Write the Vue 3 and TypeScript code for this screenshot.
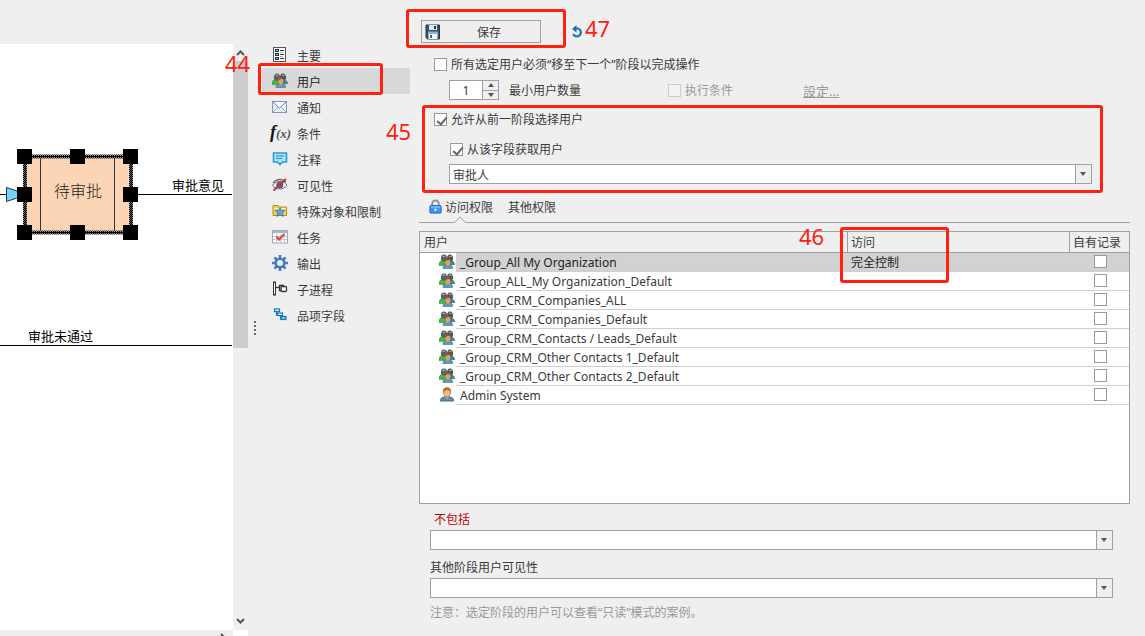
<script setup lang="ts">
import { ref } from 'vue'

interface NavItem { icon: string; label: string }
interface AccessRow { name: string; kind: 'group' | 'person'; access: string; own: boolean }

const navItems: NavItem[] = [
  { icon: 'main', label: '主要' },
  { icon: 'group', label: '用户' },
  { icon: 'mail', label: '通知' },
  { icon: 'fx', label: '条件' },
  { icon: 'note', label: '注释' },
  { icon: 'eye', label: '可见性' },
  { icon: 'folder', label: '特殊对象和限制' },
  { icon: 'task', label: '任务' },
  { icon: 'gear', label: '输出' },
  { icon: 'sub', label: '子进程' },
  { icon: 'fields', label: '品项字段' },
]
const activeNav = ref(1)
const minUsers = ref(1)
const mustMove = ref(false)
const runCondition = ref(false)
const allowSelect = ref(true)
const fromField = ref(true)
const selectedRow = ref(0)

const rows = ref<AccessRow[]>([
  { name: '_Group_All My Organization', kind: 'group', access: '完全控制', own: false },
  { name: '_Group_ALL_My Organization_Default', kind: 'group', access: '', own: false },
  { name: '_Group_CRM_Companies_ALL', kind: 'group', access: '', own: false },
  { name: '_Group_CRM_Companies_Default', kind: 'group', access: '', own: false },
  { name: '_Group_CRM_Contacts / Leads_Default', kind: 'group', access: '', own: false },
  { name: '_Group_CRM_Other Contacts 1_Default', kind: 'group', access: '', own: false },
  { name: '_Group_CRM_Other Contacts 2_Default', kind: 'group', access: '', own: false },
  { name: 'Admin System', kind: 'person', access: '', own: false },
])

const handles = [
  [17, 105], [70, 105], [123, 105],
  [17, 143], [123, 143],
  [17, 181], [70, 181], [123, 181],
]
</script>

<template>
  <div class="app">
    <svg class="defs" aria-hidden="true">
      <defs>
        <symbol id="i-main" viewBox="0 0 16 16">
          <rect x="1.500" y="0.500" width="12" height="14" fill="#fff" stroke="#555" />
          <path d="M3 2h4v3H3zM3 6h4v3H3zM3 10h4v3H3z" fill="#16384f" />
          <path d="M4 3h2v1H4zM4 7h2v1H4zM4 11h2v1H4z" fill="#79c4ee" />
          <path d="M8 3.500h4M8 7.500h4M8 11.500h4" stroke="#333" />
          <path d="M8 5.500h3M8 9.500h3" stroke="#aaa" />
        </symbol>
        <symbol id="i-group" viewBox="0 0 16 16">
          <path d="M0 10.500c0-3 2-4 4-4.500l4 1.500-2 4H0z" fill="#45b83a" stroke="#36802f" stroke-width=".5" />
          <path d="M9 8l3-1.500c2 .5 4 1.500 4 4.500h-5z" fill="#3f8396" />
          <path d="M2 6c-.5-3.500.5-5.500 2.800-5.500S8 2 8 4v3.500H4z" fill="#59626a" />
          <path d="M8 6c-.3-3.500.7-5.500 3-5.500s3.500 2.500 3 5.500l-2 2H8z" fill="#4d555d" />
          <path d="M3.500 3c.5-1.200 2-1.200 2.500 0M10 3c.5-1.200 2-1.200 2.500 0" stroke="#b8c0c4" stroke-width="1" fill="none" />
          <path d="M4 14.500c-.3-2.500 1.300-3.700 3.300-4h3c2 .3 3.600 1.500 3.300 4z" fill="#6298b8" stroke="#3d6f91" stroke-width=".6" />
          <path d="M6.200 7.500c0-2 1-2.700 2.600-2.700s2.700.7 2.700 2.700S10.200 11.800 8.800 11.800 6.200 9.500 6.200 7.500z" fill="#dda06c" />
          <path d="M6 8c-.3-2.500 1-3.700 2.800-3.700S12 5.500 11.700 8L10.500 6 8 6.200z" fill="#985321" />
        </symbol>
        <symbol id="i-person" viewBox="0 0 16 16">
          <path d="M1.500 14c0-3 1.500-4 4.500-4h4c3 0 4.500 1 4.500 4z" fill="#5d91b3" stroke="#3c6a8c" />
          <path d="M5.800 9h4.400L8 12.500z" fill="#e4aa76" />
          <path d="M4.500 5c0-2.800 1.300-4 3.500-4s3.500 1.200 3.500 4S10 10 8 10 4.500 7.800 4.500 5z" fill="#efba88" stroke="#a55c2b" stroke-width=".7" />
          <path d="M4 6c-.7-3.600 1-5.500 4-5.500S12.700 2.400 12 6L10.800 3.500 8 3l-2.900 1z" fill="#b96a31" />
        </symbol>
        <symbol id="i-mail" viewBox="0 0 16 16">
          <rect x=".5" y="2.500" width="14" height="11" fill="#eaf1fc" stroke="#8596b8" />
          <path d="M1 13l5-5M14 13L9 8" stroke="#9aa9c8" fill="none" />
          <path d="M1 3l6.500 6L14 3" stroke="#7183aa" fill="#f7faff" />
        </symbol>
        <symbol id="i-note" viewBox="0 0 16 16">
          <path d="M1.500 2h13v9h-4l-2.500 2.500L5.500 11h-4z" fill="#b4e0f7" stroke="#289bd8" stroke-width="1.600" />
          <path d="M4 5h8M4 7.500h6" stroke="#1688c8" />
        </symbol>
        <symbol id="i-eye" viewBox="0 0 16 16">
          <path d="M.5 8.500C3 3.500 12 3 15 8c-3 5-11 5.500-14.500.5z" fill="#e9edf4" stroke="#6d7488" />
          <circle cx="7.800" cy="8" r="3" fill="#5577aa" stroke="#394b70" /><circle cx="7.800" cy="8" r="1.200" fill="#172440" />
          <path d="M1 6c3-4 9-5 13-1" stroke="#8b5a50" stroke-width="1.500" fill="none" />
          <path d="M1.500 13.500L14 2" stroke="#bb392b" stroke-width="2" />
        </symbol>
        <symbol id="i-folder" viewBox="0 0 16 16">
          <path d="M1 12.500v-10h5l1 1.500h7.500v8.500z" fill="#f4cf5a" stroke="#b98a24" />
          <path d="M2 5.500h12" stroke="#fff0ab" />
          <path d="M8 4.500l1.300 3 3.500.3-2.600 2.300.8 3.400-3-1.900-3 1.900.8-3.400-2.600-2.300 3.500-.3z" fill="#5aabd8" stroke="#287aae" stroke-width=".8" />
        </symbol>
        <symbol id="i-task" viewBox="0 0 16 16">
          <rect x=".5" y="1.500" width="15" height="12.500" fill="#fff" stroke="#9baab9" />
          <path d="M1 3h14" stroke="#a4bacb" stroke-width="2.500" />
          <path d="M1 7.500h14M1 10.500h14M4.500 5v9M8.500 5v9M12.500 5v9" stroke="#bccbd6" />
          <path d="M4.500 7.500L7 10.500 12.500 5" stroke="#e04b2c" stroke-width="2.300" fill="none" />
        </symbol>
        <symbol id="i-gear" viewBox="0 0 16 16">
          <circle cx="8" cy="8" r="4.300" fill="none" stroke="#447ebc" stroke-width="2.600" />
          <path d="M8 0v3M8 13v3M0 8h3M13 8h3M2.400 2.400l2 2M11.600 11.600l2 2M2.400 13.600l2-2M11.600 4.400l2-2" stroke="#447ebc" stroke-width="2.600" />
        </symbol>
        <symbol id="i-sub" viewBox="0 0 16 16">
          <rect x="1.500" y="1" width="2" height="13" fill="#fff" stroke="#333" />
          <path d="M4 6.500h3" stroke="#333" stroke-width="1.300" fill="none" />
          <path d="M12 4.500H7.500v5H9" fill="none" stroke="#333" stroke-width="1.300" />
          <rect x="9" y="5.500" width="5.500" height="5" rx="1" fill="#fff" stroke="#333" stroke-width="1.300" />
        </symbol>
        <symbol id="i-fields" viewBox="0 0 16 16">
          <g fill="#fff" stroke="#1676b6" stroke-width="1.200">
            <path d="M4.500 5v3H6M8.500 9v3h1" fill="none" />
            <rect x="2.500" y="2" width="5" height="2.500" /><rect x="5.500" y="6" width="5" height="2.500" /><rect x="9" y="9.500" width="5" height="3" fill="#79c4ee" />
          </g>
        </symbol>
        <symbol id="i-save" viewBox="0 0 16 16">
          <path d="M1 1h13.500v14H2.500L1 13.500z" fill="#3e4e65" stroke="#2c3848" />
          <rect x="4" y="1" width="8" height="5" fill="#dbe6f1" /><rect x="9" y="2" width="2" height="3" fill="#273447" />
          <rect x="3" y="7.500" width="10" height="3" fill="#8fb2d5" />
          <rect x="3.500" y="10" width="9" height="5" fill="#f5f7fa" /><rect x="5" y="11" width="2" height="3" fill="#51647c" />
        </symbol>
        <symbol id="i-lock" viewBox="0 0 16 16">
          <path d="M4.500 7.500V4.500a3.500 3.500 0 0 1 7 0v3" fill="none" stroke="#888" stroke-width="1.800" />
          <rect x="2" y="6.500" width="12" height="8" rx="1" fill="#3f98f5" stroke="#1763be" />
          <path d="M3 8h10" stroke="#9dd0ff" /><circle cx="8" cy="11" r="1.200" fill="#fff" />
        </symbol>
        <symbol id="i-redo" viewBox="0 0 12 14">
          <path d="M5 3.500A4 4 0 1 1 2.200 9" fill="none" stroke="#2878bf" stroke-width="2.400" />
          <path d="M1 4L5.500 0v7.500z" fill="#2468aa" />
        </symbol>
      </defs>
    </svg>

    <section class="canvas-pane">
      <div class="canvas">
        <svg class="diagram" viewBox="0 0 233 586" width="233" height="586">
          <defs>
            <pattern id="hatch" width="2" height="2" patternUnits="userSpaceOnUse">
              <rect width="2" height="2" fill="#999" /><rect width="1" height="1" fill="#000" /><rect x="1" y="1" width="1" height="1" fill="#000" />
            </pattern>
          </defs>
          <path d="M0 150.500H8M138 150.500H232M0 301.500H232" stroke="#000" />
          <path d="M6.500 143.500L20 148v5l-13.500 4.500z" fill="#6fd6fb" stroke="#234" />
          <rect x="25" y="112.500" width="106" height="76" fill="#fbd5b5" stroke="url(#hatch)" stroke-width="4" />
          <path d="M25 112.500h106v76H25z" fill="none" stroke="#000" />
          <path d="M40.500 114V187M114.500 114V187" stroke="#333" />
          <rect v-for="(h, i) in handles" :key="i" :x="h[0]" :y="h[1]" width="15" height="15" fill="#000" />
          <text x="78" y="153" class="node-text" text-anchor="middle">待审批</text>
          <text x="172" y="146" class="edge-text">审批意见</text>
          <text x="28" y="297" class="edge-text">审批未通过</text>
        </svg>
      </div>
      <div class="scroll-y">
        <svg width="9" height="6" viewBox="0 0 9 6"><path d="M1 5l3.500-3.500L8 5" fill="none" stroke="#555" stroke-width="2" /></svg>
        <div class="thumb"></div>
        <svg class="down" width="9" height="6" viewBox="0 0 9 6"><path d="M1 1l3.500 3.500L8 1" fill="none" stroke="#555" stroke-width="2" /></svg>
      </div>
      <div class="scroll-x">
        <svg width="6" height="9" viewBox="0 0 6 9"><path d="M1 1l3.500 3.500L1 8" fill="none" stroke="#555" stroke-width="2" /></svg>
      </div>
      <div class="corner"></div>
    </section>

    <div class="splitter"><i></i><i></i><i></i><i></i></div>

    <nav class="nav">
      <button
        v-for="(item, i) in navItems" :key="item.label" type="button"
        class="nav-item" :class="{ active: i === activeNav }" @click="activeNav = i"
      >
        <span v-if="item.icon === 'fx'" class="fx"><b>f</b>(x)</span>
        <svg v-else class="icon"><use :href="'#i-' + item.icon" /></svg>
        <span class="nav-label">{{ item.label }}</span>
      </button>
      <div class="mark mark-nav"></div>
      <span class="num num-nav">44</span>
    </nav>

    <main class="main">
      <div class="toolbar">
        <button type="button" class="save"><svg class="icon"><use href="#i-save" /></svg><span>保存</span></button>
        <button type="button" class="redo" aria-label="刷新"><svg width="12" height="14"><use href="#i-redo" /></svg></button>
        <div class="mark mark-save"></div>
        <span class="num num-save">47</span>
      </div>

      <div class="options">
        <label class="check"><input v-model="mustMove" type="checkbox"><span>所有选定用户必须“移至下一个”阶段以完成操作</span></label>
        <div class="count-row">
          <div class="spinner">
            <input id="min-users" v-model="minUsers" type="text">
            <div class="spin">
              <button type="button" aria-label="增加" @click="minUsers++"><i class="tri up"></i></button>
              <button type="button" aria-label="减少" @click="minUsers--"><i class="tri"></i></button>
            </div>
          </div>
          <label for="min-users" class="count-label">最小用户数量</label>
          <label class="check disabled"><input v-model="runCondition" type="checkbox" disabled><span>执行条件</span></label>
          <a href="#" class="settings">設定...</a>
        </div>
      </div>

      <div class="source">
        <label class="check"><input v-model="allowSelect" type="checkbox"><span>允许从前一阶段选择用户</span></label>
        <label class="check inner"><input v-model="fromField" type="checkbox"><span>从该字段获取用户</span></label>
        <div class="drop inner"><select aria-label="字段"><option>审批人</option></select><i class="tri"></i></div>
        <div class="mark mark-source"></div>
        <span class="num num-source">45</span>
      </div>

      <div class="tabs">
        <button type="button" class="tab current"><svg class="icon lock"><use href="#i-lock" /></svg><span>访问权限</span></button>
        <button type="button" class="tab"><span>其他权限</span></button>
      </div>

      <div class="grid-panel">
        <table>
          <colgroup><col class="c-icon"><col><col class="c-access"><col class="c-own"></colgroup>
          <thead>
            <tr>
              <th colspan="2">用户</th>
              <th class="sep">访问<div class="mark mark-access"></div><span class="num num-access">46</span></th>
              <th class="sep">自有记录</th>
            </tr>
          </thead>
          <tbody>
            <tr v-for="(row, i) in rows" :key="row.name" :class="{ selected: i === selectedRow }" @click="selectedRow = i">
              <td class="cell-icon"><svg class="icon"><use :href="'#i-' + row.kind" /></svg></td>
              <td>{{ row.name }}</td>
              <td>{{ row.access }}</td>
              <td class="cell-check"><input v-model="row.own" type="checkbox" :aria-label="row.name"></td>
            </tr>
          </tbody>
        </table>
      </div>

      <div class="bottom">
        <label for="exclude" class="exclude">不包括</label>
        <div class="drop"><select id="exclude"><option></option></select><i class="tri"></i></div>
        <label for="visible" class="visible">其他阶段用户可见性</label>
        <div class="drop"><select id="visible"><option></option></select><i class="tri"></i></div>
        <p>注意：选定阶段的用户可以查看“只读”模式的案例。</p>
      </div>
    </main>
  </div>
</template>

<style>
body { margin: 0; background: #efefef; }
</style>

<style scoped>
* { box-sizing: border-box; }
.app {
  display: flex; min-height: 100vh; overflow: hidden; background: #efefef; color: #3a3a3a;
  font-family: "Noto Sans", "Noto Sans CJK SC", sans-serif; font-size: 12px; line-height: 18px;
}
.defs { position: absolute; width: 0; height: 0; }
button, input, select { font: inherit; color: inherit; margin: 0; padding: 0; border-radius: 0; }
button { background: none; border: 0; text-align: left; }
.icon { width: 16px; height: 16px; flex: none; display: block; }

.canvas-pane { flex: none; display: grid; grid-template: 1fr 7px / 233px 15px; padding-top: 44px; }
.canvas { background: #fff; overflow: hidden; }
.diagram { display: block; }
.node-text { font-size: 16px; font-family: "Noto Sans CJK SC", sans-serif; font-weight: 300; fill: #222; }
.edge-text { font-size: 13px; font-family: "Noto Sans CJK SC", sans-serif; fill: #000; }
.scroll-y { display: flex; flex-direction: column; align-items: center; padding: 6px 0; }
.scroll-y svg { flex: none; }
.thumb { width: 15px; height: 287px; margin-top: 5px; background: #cdcdcd; }
.scroll-y .down { margin-top: auto; }
.scroll-x { display: flex; justify-content: flex-end; padding: 3px 7px 0 0; overflow: hidden; }
.corner { background: #fff; }

.splitter { flex: none; width: 14px; padding: 18px 0 0 6px; display: flex; flex-direction: column; justify-content: center; gap: 2px; }
.splitter i { width: 2px; height: 2px; background: #666; }

.nav { position: relative; flex: none; width: 148px; padding-top: 42px; }
.nav-item { display: flex; align-items: center; gap: 9px; width: 100%; height: 26px; padding-left: 10px; }
.nav-item.active { background: #d8d8d8; color: #222; }
.nav-label { padding-top: 4px; }
.fx { width: 16px; flex: none; margin-left: -2px; margin-right: 2px; white-space: nowrap; font: italic bold 13px/18px "Liberation Serif", serif; color: #555; }
.fx b { font-size: 18px; color: #111; }

.mark { position: absolute; border: 3px solid #ff2010; border-radius: 3px; pointer-events: none; z-index: 2; }
.num { position: absolute; z-index: 3; color: #ff2010; font-size: 22px; line-height: 24px; font-weight: 400; }
.mark-nav { left: -4px; top: 63px; width: 125px; height: 32px; }
.num-nav { left: -37px; top: 51px; }

.main { flex: 1; min-width: 0; padding: 0 15px 0 9px; }
.toolbar { position: relative; display: flex; align-items: center; gap: 30px; padding: 20px 0 0 2px; }
.save { display: flex; align-items: center; width: 120px; height: 23px; padding: 0 3px; border: 1px solid #a0a0a0; }
.save span { flex: 1; text-align: center; padding-top: 2px; }
.redo svg { display: block; }
.mark-save { left: -13px; top: 9px; width: 160px; height: 39px; }
.num-save { left: 166px; top: 16px; }

.options { padding: 12px 0 0 15px; }
.check { display: flex; align-items: center; gap: 4px; height: 18px; }
.check span { padding-top: 2px; }
input[type="checkbox"] { appearance: none; position: relative; display: block; flex: none; width: 13px; height: 13px; border: 1px solid #999; background: #fff; }
input[type="checkbox"]:checked::after { content: ""; position: absolute; left: 4px; top: 1px; width: 4px; height: 8px; border: solid #666; border-width: 0 2px 2px 0; transform: rotate(40deg); }
.disabled { color: #999; }
.disabled input[type="checkbox"] { border-color: #ccc; background: #f3f3f3; }
.count-row { display: grid; grid-template-columns: 60px 159px 135px auto; align-items: center; height: 20px; margin: 7px 0 0 15px; }
.count-label { padding-top: 2px; }
.spinner { display: flex; width: 50px; height: 20px; }
.spinner input { width: 34px; padding-top: 1px; border: 1px solid #a0a0a0; background: #fff; text-align: center; }
.spin { width: 17px; margin-left: -1px; border: 1px solid #a0a0a0; display: flex; flex-direction: column; }
.spin button { flex: 1; display: flex; align-items: center; justify-content: center; }
.spin button + button { border-top: 1px solid #a0a0a0; }
.tri { width: 0; height: 0; border: 3px solid transparent; border-top: 4px solid #555; border-bottom: 0; }
.tri.up { border-top: 0; border-bottom: 4px solid #555; }
.settings { padding-top: 2px; color: #999; font-size: 13px; }

.source { position: relative; margin: 5px 28px 0 4px; padding: 5px 10px 9px 11px; }
.inner { margin-left: 15px; }
.check.inner { margin-top: 12px; margin-left: 16px; }
.mark-source { inset: 0 -1px 0 -1px; }
.num-source { left: -37px; top: 14px; }
.drop { position: relative; height: 20px; }
.drop.inner { margin-top: 6px; }
.drop select { appearance: none; display: block; width: 100%; height: 100%; padding: 2px 16px 0 3px; border: 1px solid #a0a0a0; background: linear-gradient(to left, #efefef 15px, #a0a0a0 15px, #a0a0a0 16px, #fff 16px); outline: 0; }
.drop .tri { position: absolute; right: 6px; top: 8px; pointer-events: none; }

.tabs { display: flex; gap: 15px; height: 30px; padding: 4px 0 0 9px; border-bottom: 1px solid #a0a0a0; }
.tab { position: relative; display: flex; align-items: center; gap: 2px; height: 20px; }
.tab span { padding-top: 2px; }
.lock { width: 15px; }
.tab.current::after { content: ""; position: absolute; left: 27px; top: 21px; width: 9px; height: 9px; background: #efefef; border: solid #a0a0a0; border-width: 1px 0 0 1px; transform: rotate(45deg); clip-path: polygon(0 0, 100% 0, 0 100%); }

.grid-panel { height: 273px; margin-top: 8px; border: 1px solid #a0a0a0; background: #fff; }
table { width: 100%; table-layout: fixed; border-collapse: separate; border-spacing: 0; }
.c-icon { width: 36px; }
.c-access { width: 222px; }
.c-own { width: 60px; }
th { position: relative; height: 21px; padding: 2px 0 0 4px; font-weight: 400; text-align: left; background: #efefef; border-bottom: 1px solid #a0a0a0; line-height: 18px; white-space: nowrap; }
th.sep { padding-left: 3px; border-left: 1px solid #a0a0a0; }
td { height: 19px; padding: 1px 4px 0; border-bottom: 1px solid #cfcfcf; line-height: 17px; white-space: nowrap; }
.cell-icon { padding: 0 0 1px 19px; border-bottom: 0; }
.selected td:not(.cell-icon) { background: #d2d2d2; color: #222; }
.cell-check { padding: 0 3px 1px 5px; }
.cell-check input { margin: 0 auto; }
.mark-access { left: -8px; top: -5px; width: 109px; height: 56px; }
.num-access { left: -49px; top: -8px; }

.bottom { padding: 7px 17px 0 11px; }
.bottom label { display: block; height: 19px; }
.bottom .exclude { padding-left: 4px; color: #c00000; }
.bottom .visible { margin-top: 9px; }
.bottom p { margin: 6px 0 0; color: #999; }
</style>
